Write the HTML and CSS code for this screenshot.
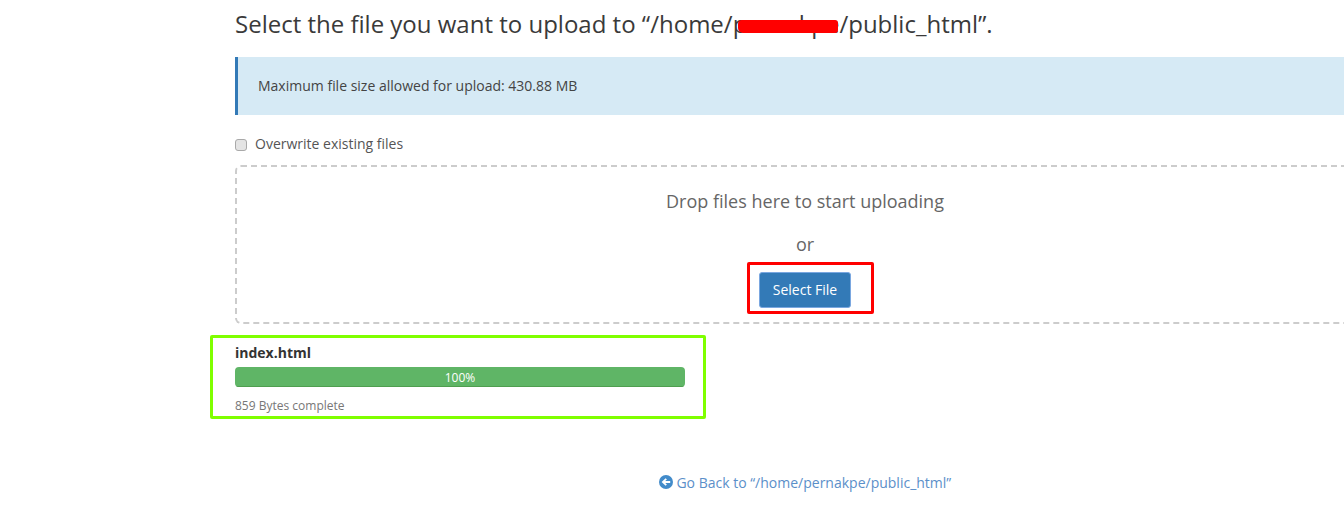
FILE: index.html
```html
<!DOCTYPE html>
<html lang="en">
<head>
  <meta charset="UTF-8" />
  <title>File Upload</title>
  <link rel="stylesheet" href="styles.css">
</head>
<body>
  <div class="page">
    <h1 class="title">Select the file you want to upload to “/home/pernakpe/public_html”.<span class="scribble"></span></h1>
    <div class="notice">Maximum file size allowed for upload: 430.88 MB</div>
    <label class="overwrite"><input type="checkbox" class="overwrite-box"> Overwrite existing files</label>
    <div class="dropzone">
      <div class="drop-text">Drop files here to start uploading</div>
      <div class="drop-or">or</div>
      <div class="select-wrap">
        <button class="select-btn">Select File</button>
        <span class="mark-red"></span>
      </div>
    </div>
    <div class="file-item">
      <span class="mark-green"></span>
      <div class="file-name">index.html</div>
      <div class="progress"><div class="progress-bar">100%</div></div>
      <div class="file-status">859 Bytes complete</div>
    </div>
    <div class="back">
      <a href="#" class="back-link">
        <svg class="back-icon" viewBox="0 0 14 14" width="14" height="14"><circle cx="7" cy="7" r="7" fill="#428bca"/><path d="M2.6 7 6.6 3.2 7.9 4.4 6.2 6H11.2V8H6.2L7.9 9.6 6.6 10.8Z" fill="#fff"/></svg>
        Go Back to “/home/pernakpe/public_html”
      </a>
    </div>
  </div>
</body>
</html>
```

FILE: styles.css
```css
* { box-sizing: border-box; }
html, body { margin: 0; padding: 0; height: 100%; overflow: hidden; background: #fff; }
body {
  font-family: 'Open Sans', sans-serif;
  font-size: 14px;
  color: #333;
}
.page {
  width: 1140px;
  margin-left: 235px;
  padding-top: 7px;
}
.title {
  position: relative;
  margin: 0;
  font-size: 24px;
  font-weight: 400;
  line-height: 33px;
  color: #3a3a3a;
}
.scribble {
  position: absolute;
  left: 503px;
  top: 13px;
  width: 100px;
  height: 13px;
  background: #f00;
  border-radius: 4px 3px 3px 5px;
}
.notice {
  margin-top: 17px;
  height: 58px;
  padding-left: 20px;
  line-height: 58px;
  background: #d6eaf5;
  border-left: 3px solid #337ab7;
  color: #444;
}
.overwrite {
  display: flex;
  align-items: center;
  margin-top: 19px;
  line-height: 20px;
  color: #555;
}
.overwrite-box {
  appearance: none;
  width: 12px;
  height: 12px;
  margin: 1px 8px 0 0;
  background: #e4e4e4;
  border: 1px solid #a9a9a9;
  border-radius: 3px;
}
.dropzone {
  margin-top: 11px;
  height: 159px;
  border: 2px dashed #ccc;
  border-radius: 6px;
  text-align: center;
  color: #666;
  font-size: 18px;
}
.drop-text { margin-top: 22px; line-height: 24px; }
.drop-or { margin-top: 19px; line-height: 24px; }
.select-wrap {
  position: relative;
  display: inline-block;
  margin-top: 16px;
}
.select-btn {
  display: block;
  width: 92px;
  height: 36px;
  padding: 0 0 2px;
  border: 1px solid #7aa7e0;
  border-radius: 3px;
  background: #337ab7;
  color: #fff;
  font-family: inherit;
  font-size: 14px;
}
.mark-red {
  position: absolute;
  left: -12px;
  top: -10px;
  width: 127px;
  height: 52px;
  border: 3px solid #f00;
  border-radius: 2px;
}
.file-item {
  position: relative;
  width: 450px;
  padding-top: 19px;
}
.mark-green {
  position: absolute;
  left: -25px;
  top: 11px;
  width: 496px;
  height: 84px;
  border: 3px solid #7fff00;
  border-radius: 2px;
}
.file-name { font-weight: 700; line-height: 20px; }
.progress {
  margin-top: 4px;
  height: 20px;
  border-radius: 4px;
  overflow: hidden;
  background: #f5f5f5;
}
.progress-bar {
  height: 20px;
  padding-top: 1px;
  background: #5fb566;
  border-bottom: 1px solid #4f9e4f;
  color: #fff;
  font-size: 12px;
  line-height: 20px;
  text-align: center;
}
.file-status {
  margin-top: 10px;
  font-size: 12px;
  line-height: 17px;
  color: #777;
}
.back {
  margin-top: 59px;
  text-align: center;
  width: 1140px;
}
.back-link {
  color: #5b8fc9;
  text-decoration: none;
  line-height: 20px;
}
.back-icon { vertical-align: -1px; }
```
